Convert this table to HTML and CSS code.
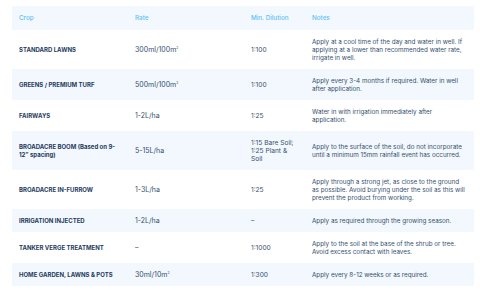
FILE: index.html
```html
<!DOCTYPE html>
<html lang="en">
<head>
  <meta charset="UTF-8" />
  <title>Application Rates</title>
  <link rel="stylesheet" href="styles.css">
</head>
<body>
  <!-- Rates table -->
  <table class="rates">
    <thead>
      <tr>
        <th class="col-crop">Crop</th>
        <th class="col-rate">Rate</th>
        <th class="col-dil">Min. Dilution</th>
        <th class="col-notes">Notes</th>
      </tr>
    </thead>
    <tbody>
      <tr>
        <td class="crop">STANDARD LAWNS</td>
        <td class="rate">300ml/100m<sup>2</sup></td>
        <td class="dil">1:100</td>
        <td class="notes">Apply at a cool time of the day and water in well. If applying at a lower than recommended water rate, irrigate in well.</td>
      </tr>
      <tr>
        <td class="crop">GREENS / PREMIUM TURF</td>
        <td class="rate">500ml/100m<sup>2</sup></td>
        <td class="dil">1:100</td>
        <td class="notes">Apply every 3-4 months if required. Water in well after application.</td>
      </tr>
      <tr>
        <td class="crop">FAIRWAYS</td>
        <td class="rate">1-2L/ha</td>
        <td class="dil">1:25</td>
        <td class="notes">Water in with irrigation immediately after application.</td>
      </tr>
      <tr>
        <td class="crop">BROADACRE BOOM (Based on 9-12” spacing)</td>
        <td class="rate">5-15L/ha</td>
        <td class="dil">1:15 Bare Soil; 1:25 Plant &amp; Soil</td>
        <td class="notes">Apply to the surface of the soil, do not incorporate until a minimum 15mm rainfall event has occurred.</td>
      </tr>
      <tr>
        <td class="crop">BROADACRE IN-FURROW</td>
        <td class="rate">1-3L/ha</td>
        <td class="dil">1:25</td>
        <td class="notes">Apply through a strong jet, as close to the ground as possible. Avoid burying under the soil as this will prevent the product from working.</td>
      </tr>
      <tr>
        <td class="crop">IRRIGATION INJECTED</td>
        <td class="rate">1-2L/ha</td>
        <td class="dil">–</td>
        <td class="notes">Apply as required through the growing season.</td>
      </tr>
      <tr>
        <td class="crop">TANKER VERGE TREATMENT</td>
        <td class="rate">–</td>
        <td class="dil">1:1000</td>
        <td class="notes">Apply to the soil at the base of the shrub or tree. Avoid excess contact with leaves.</td>
      </tr>
      <tr>
        <td class="crop">HOME GARDEN, LAWNS &amp; POTS</td>
        <td class="rate">30ml/10m<sup>2</sup></td>
        <td class="dil">1:300</td>
        <td class="notes">Apply every 8-12 weeks or as required.</td>
      </tr>
    </tbody>
  </table>
</body>
</html>
```

FILE: styles.css
```css
body {
  margin: 0;
  padding: 6px 6px 0 12px;
  background: #fff;
  font-family: Inter, 'Noto Sans', sans-serif;
  font-size: 6.3px;
  line-height: 8px;
  color: #34506f;
}

.rates {
  width: 462px;
  border-collapse: collapse;
  table-layout: fixed;
}

/* widths here are content widths, padding comes on top */
.col-crop { width: 102px; }
.col-rate { width: 102px; }
.col-dil { width: 47px; }

.rates th {
  text-align: left;
  font-weight: 500;
  color: #5ec2f6;
  background: #f2f8fd;
  padding: 8px 7px;
}

.rates td {
  padding: 7.5px 6px 7.5px 7px;
  vertical-align: middle;
}

.rates tbody tr:nth-child(even) td {
  background: #f2f8fd;
}

.crop {
  font-size: 6px;
  font-weight: 700;
  color: #1f3b60;
}

.rate { font-size: 7px; }
.dil { font-size: 6.6px; }

.rates td.notes {
  font-size: 6.3px;
  padding-right: 9px;
}

sup {
  font-size: 3.5px;
  line-height: 0;
  vertical-align: 3px;
}
```
